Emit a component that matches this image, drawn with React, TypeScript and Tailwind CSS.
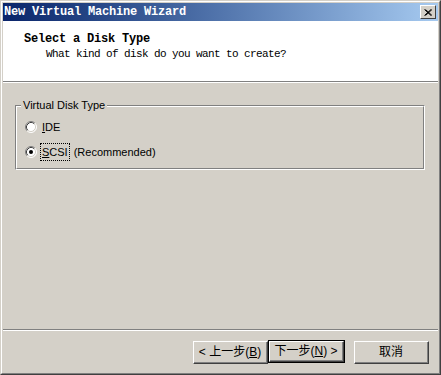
import React from 'react';

const MONO = { fontFamily: '"Liberation Mono", "DejaVu Sans Mono", monospace' };
const SANS = { fontFamily: 'Tahoma, "Liberation Sans", Arial, sans-serif' };
const CJK = { fontFamily: '"Liberation Sans", "Noto Sans CJK SC", sans-serif' };

const Radio: React.FC<{ checked?: boolean }> = ({ checked }) => (
  <svg width="12" height="12" viewBox="0 0 12 12" className="shrink-0">
    <circle cx="6" cy="6" r="5" fill="#ffffff" />
    <path d="M2.11 9.89 A5.5 5.5 0 0 1 9.89 2.11" stroke="#808080" strokeWidth="1" fill="none" />
    <path d="M9.89 2.11 A5.5 5.5 0 0 1 2.11 9.89" stroke="#ffffff" strokeWidth="1" fill="none" />
    <path d="M2.82 9.18 A4.5 4.5 0 0 1 9.18 2.82" stroke="#404040" strokeWidth="1" fill="none" />
    <path d="M9.18 2.82 A4.5 4.5 0 0 1 2.82 9.18" stroke="#d4d0c8" strokeWidth="1" fill="none" />
    {checked && <circle cx="6" cy="6" r="2" fill="#000000" />}
  </svg>
);

const Button: React.FC<{ children: React.ReactNode; isDefault?: boolean; className?: string }> = ({ children, isDefault, className }) => (
  <div className={`${isDefault ? 'border border-black' : ''} ${className ?? ''}`}>
    <div className="border-t border-l border-white border-r-[#404040] border-b-[#404040] border-r border-b bg-[#d4d0c8]">
      <div
        className={`flex items-center justify-center ${isDefault ? 'h-[19px] w-[73px]' : 'h-[21px] w-[73px]'} border-r border-b border-[#808080] text-[12px] text-black`}
        style={CJK}
      >
        {children}
      </div>
    </div>
  </div>
);

export default function App() {
  return (
    <div className="w-[441px] h-[375px] border border-[#d4d0c8] border-r-[#404040] border-b-[#404040] bg-[#d4d0c8]">
      <div className="h-full border border-white border-r-[#808080] border-b-[#808080] p-[1px] flex flex-col">
        {/* Title bar */}
        <div className="h-[18px] shrink-0 flex items-center justify-between bg-gradient-to-r from-[#0a246a] to-[#a6caf0]">
          <span className="pl-[1px] text-white font-bold text-[12px] tracking-[-0.2px] leading-none" style={MONO}>
            New Virtual Machine Wizard
          </span>
          <div className="mr-[2px] w-[16px] h-[14px] bg-[#d4d0c8] border-t border-l border-white border-r border-b border-r-[#404040] border-b-[#404040] flex items-center justify-center">
            <svg width="8" height="7" viewBox="0 0 8 7">
              <path d="M0.5 0.5 L7 6.5 M1.5 0.5 L8 6.5 M7 0.5 L0.5 6.5 M8 0.5 L1.5 6.5" stroke="#000" strokeWidth="1" />
            </svg>
          </div>
        </div>

        {/* Header */}
        <div className="h-[60px] shrink-0 bg-white pl-[21px] pt-[11px]">
          <div className="text-[12px] font-bold leading-[14px] tracking-[-0.2px] text-black" style={MONO}>
            Select a Disk Type
          </div>
          <div className="pl-[22px] pt-[1px] text-[11px] leading-[14px] tracking-[-0.6px] text-black" style={MONO}>
            What kind of disk do you want to create?
          </div>
        </div>
        <div className="h-[1px] shrink-0 bg-[#808080]" />
        <div className="h-[1px] shrink-0 bg-white" />

        {/* Body */}
        <div className="h-[246px] shrink-0 pt-[22px] pl-[12px] pr-[13px]">
          <div className="relative h-[65px] border border-[#808080] border-r-white border-b-white">
            <div className="h-full border border-white border-r-[#808080] border-b-[#808080]">
              <span
                className="absolute left-[5px] -top-[8px] bg-[#d4d0c8] px-[2px] text-[11px] leading-[14px] text-black"
                style={SANS}
              >
                Virtual Disk Type
              </span>
              <div className="flex flex-col pl-[8px] pt-[14px] gap-[13px]">
                <div className="flex items-center gap-[4px] h-[12px]">
                  <Radio />
                  <span className="text-[11px] leading-[14px] text-black px-[1px]" style={SANS}>
                    <u>I</u>DE
                  </span>
                </div>
                <div className="flex items-center gap-[3px] h-[12px]">
                  <Radio checked />
                  <span className="text-[11px] leading-[14px] text-black flex items-center" style={SANS}>
                    <span className="border border-dotted border-black px-[1px] py-[1px]">
                      <u>S</u>CSI
                    </span>
                    <span className="pl-[4px]">(Recommended)</span>
                  </span>
                </div>
              </div>
            </div>
          </div>
        </div>

        <div className="h-[1px] shrink-0 bg-[#808080]" />
        <div className="h-[1px] shrink-0 bg-white" />

        {/* Buttons */}
        <div className="flex-1 flex items-start justify-end pt-[9px] pr-[9px]">
          <Button className="mt-[1px]">
            <span>&lt; 上一步(<u>B</u>)</span>
          </Button>
          <Button isDefault>
            <span>下一步(<u>N</u>) &gt;</span>
          </Button>
          <Button className="ml-[9px] mt-[1px]">
            <span>取消</span>
          </Button>
        </div>
      </div>
    </div>
  );
}
